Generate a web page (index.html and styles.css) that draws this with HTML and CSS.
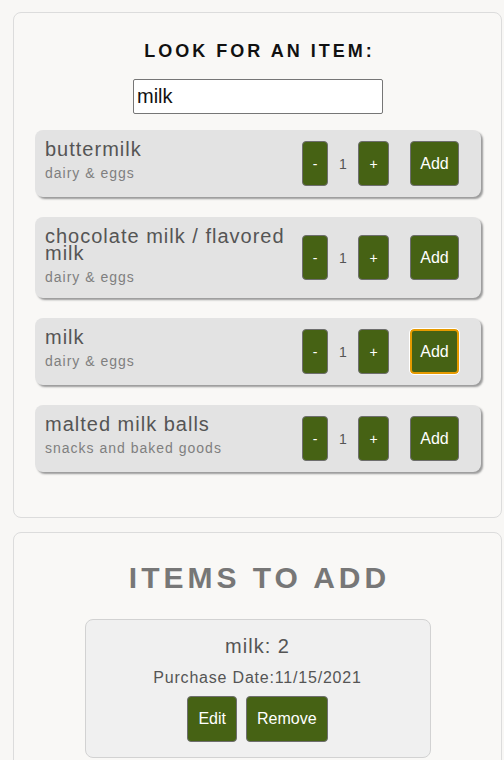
FILE: index.html
```html
<!DOCTYPE html>
<html lang="en">
<head>
<meta charset="utf-8">
<title>Grocery</title>
<link rel="stylesheet" href="styles.css">
</head>
<body>
<div class="page">
  <section class="card search-card">
    <h2 class="search-title">LOOK FOR AN ITEM:</h2>
    <div class="search-box"><input class="search-input" type="text" value="milk"></div>
    <ul class="results">
      <li class="result">
        <div class="result-text">
          <div class="result-name">buttermilk</div>
          <div class="result-cat">dairy &amp; eggs</div>
        </div>
        <div class="controls">
          <button class="btn btn-small">-</button>
          <span class="count">1</span>
          <button class="btn btn-small">+</button>
          <button class="btn btn-add">Add</button>
        </div>
      </li>
      <li class="result">
        <div class="result-text">
          <div class="result-name">chocolate milk / flavored milk</div>
          <div class="result-cat">dairy &amp; eggs</div>
        </div>
        <div class="controls">
          <button class="btn btn-small">-</button>
          <span class="count">1</span>
          <button class="btn btn-small">+</button>
          <button class="btn btn-add">Add</button>
        </div>
      </li>
      <li class="result">
        <div class="result-text">
          <div class="result-name">milk</div>
          <div class="result-cat">dairy &amp; eggs</div>
        </div>
        <div class="controls">
          <button class="btn btn-small">-</button>
          <span class="count">1</span>
          <button class="btn btn-small">+</button>
          <button class="btn btn-add is-focused">Add</button>
        </div>
      </li>
      <li class="result">
        <div class="result-text">
          <div class="result-name">malted milk balls</div>
          <div class="result-cat">snacks and baked goods</div>
        </div>
        <div class="controls">
          <button class="btn btn-small">-</button>
          <span class="count">1</span>
          <button class="btn btn-small">+</button>
          <button class="btn btn-add">Add</button>
        </div>
      </li>
    </ul>
  </section>

  <section class="card add-card">
    <h2 class="add-title">ITEMS TO ADD</h2>
    <div class="pending">
      <div class="pending-name">milk: 2</div>
      <div class="pending-date">Purchase Date:11/15/2021</div>
      <div class="pending-actions">
        <button class="btn btn-action">Edit</button>
        <button class="btn btn-action">Remove</button>
      </div>
    </div>
  </section>
</div>
</body>
</html>
```

FILE: styles.css
```css
* { box-sizing: border-box; }

html, body {
  margin: 0;
  padding: 0;
  background: #f8f7f5;
  font-family: "Liberation Sans", Arial, sans-serif;
}

.page {
  padding: 12px 2px 0 13px;
  display: flex;
  flex-direction: column;
  gap: 14px;
}

.card {
  background: #f9f8f6;
  border: 1px solid #dcdcdc;
  border-radius: 8px;
}

.search-card {
  padding: 28px 20px 45px 21px;
}

.search-title {
  margin: 0;
  text-align: center;
  font-size: 18px;
  line-height: 21px;
  font-weight: bold;
  letter-spacing: 3px;
  color: #111;
  padding-left: 3px;
}

.search-box {
  display: flex;
  justify-content: center;
  margin-top: 17px;
}

.search-input {
  width: 250px;
  height: 35px;
  border: 1px solid #767676;
  border-radius: 2px;
  background: #fff;
  font-family: "Liberation Sans", Arial, sans-serif;
  font-size: 20px;
  color: #111;
  padding: 0 3px;
  margin: 0;
}

.results {
  list-style: none;
  margin: 16px 0 0;
  padding: 0;
  display: flex;
  flex-direction: column;
  gap: 20px;
}

.result {
  display: flex;
  align-items: center;
  justify-content: space-between;
  background: #e3e3e3;
  border-radius: 8px;
  box-shadow: 2px 2px 2px #9a9a9a;
  padding: 10px 22px 11px 10px;
}

.result-text {
  align-self: flex-start;
  padding-top: 1px;
  padding-bottom: 2px;
  flex: 1;
  min-width: 0;
}

.result-name {
  font-size: 20px;
  line-height: 17px;
  letter-spacing: 1px;
  color: #555;
  max-width: 250px;
}

.result-cat {
  margin-top: 7px;
  font-size: 14px;
  line-height: 16px;
  letter-spacing: 1px;
  color: #7f7f7f;
}

.controls {
  display: flex;
  align-items: center;
  flex-shrink: 0;
  margin-top: 1px;
}

.btn {
  background: #466214;
  color: #fff;
  border: 1px solid #6e6e6e;
  border-radius: 4px;
  font-family: "Liberation Sans", Arial, sans-serif;
  font-size: 16px;
  cursor: pointer;
  margin: 0;
}

.btn-small {
  height: 45px;
  padding: 0 9px;
  font-size: 14px;
}

.btn-small:first-child {
  width: 26px;
  padding: 0;
}

.btn-small:nth-child(3) {
  width: 31px;
  padding: 0;
}

.count {
  font-size: 14px;
  color: #555;
  width: 30px;
  text-align: center;
}

.btn-add {
  height: 45px;
  width: 49px;
  padding: 0;
  margin-left: 21px;
}

.btn-add.is-focused {
  border: 2px solid #e69a00;
  outline: 1px solid #ffffff;
}

.add-card {
  padding: 27px 20px 24px;
  display: flex;
  flex-direction: column;
  align-items: center;
}

.add-title {
  margin: 0;
  font-size: 30px;
  line-height: 35px;
  font-weight: bold;
  letter-spacing: 4px;
  color: #777;
  padding-left: 4px;
}

.pending {
  margin-top: 24px;
  width: 346px;
  background: #f0f0f0;
  border: 1px solid #d2d2d2;
  border-radius: 8px;
  padding: 15px 0 15px;
  display: flex;
  flex-direction: column;
  align-items: center;
}

.pending-name {
  font-size: 20px;
  line-height: 23px;
  letter-spacing: 1px;
  color: #555;
}

.pending-date {
  margin-top: 11px;
  font-size: 16px;
  line-height: 18px;
  letter-spacing: 0.8px;
  color: #555;
}

.pending-actions {
  margin-top: 9px;
  display: flex;
  gap: 9px;
}

.btn-action {
  height: 46px;
  padding: 0 10px;
}
```
